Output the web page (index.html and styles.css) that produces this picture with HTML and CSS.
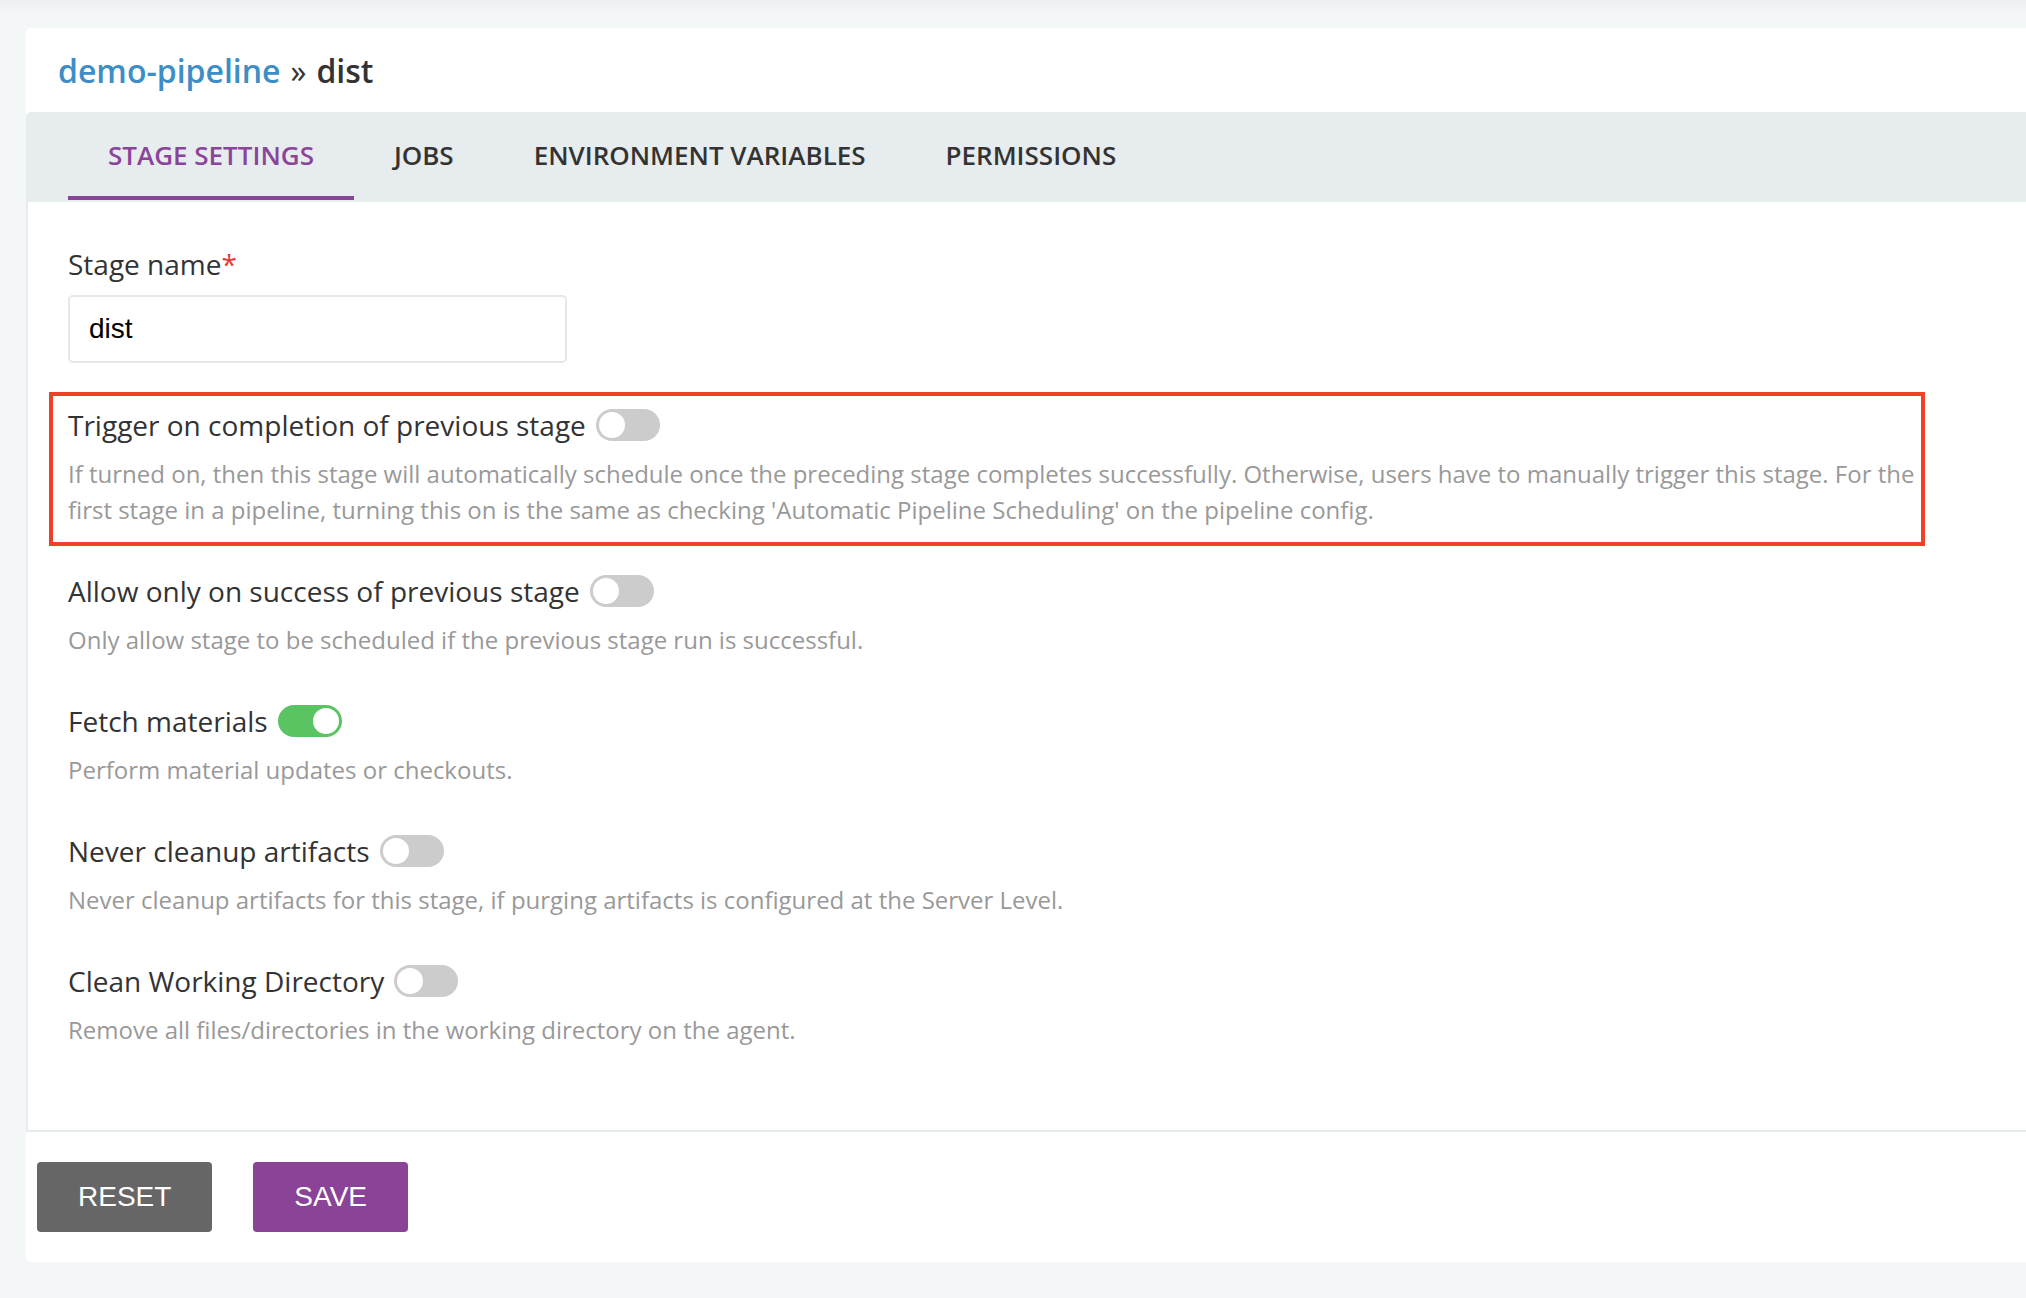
FILE: index.html
```html
<!DOCTYPE html>
<html lang="en">
<head>
  <meta charset="UTF-8" />
  <meta name="viewport" content="width=device-width, initial-scale=1.0"/>
  <title>demo-pipeline » dist</title>
  <link rel="stylesheet" href="styles.css">
</head>
<body>
  <div class="page">
    <div class="card">
      <h1 class="crumb"><a href="#">demo-pipeline</a> <span class="sep">»</span> dist</h1>

      <nav class="tabs">
        <a class="tab active" href="#">Stage Settings</a>
        <a class="tab" href="#">Jobs</a>
        <a class="tab" href="#">Environment Variables</a>
        <a class="tab" href="#">Permissions</a>
      </nav>

      <div class="panel">
        <div class="field">
          <label class="field-label" for="stageName">Stage name<span class="req">*</span></label>
          <input class="text-input" type="text" id="stageName" value="dist" />
        </div>

        <div class="option">
          <div class="field-label">Trigger on completion of previous stage <span class="switch"><span class="knob"></span></span></div>
          <p class="help">If turned on, then this stage will automatically schedule once the preceding stage completes successfully. Otherwise, users have to manually trigger this stage. For the first stage in a pipeline, turning this on is the same as checking 'Automatic Pipeline Scheduling' on the pipeline config.</p>
          <span class="callout"></span>
        </div>

        <div class="option">
          <div class="field-label">Allow only on success of previous stage <span class="switch"><span class="knob"></span></span></div>
          <p class="help">Only allow stage to be scheduled if the previous stage run is successful.</p>
        </div>

        <div class="option">
          <div class="field-label">Fetch materials <span class="switch on"><span class="knob"></span></span></div>
          <p class="help">Perform material updates or checkouts.</p>
        </div>

        <div class="option">
          <div class="field-label">Never cleanup artifacts <span class="switch"><span class="knob"></span></span></div>
          <p class="help">Never cleanup artifacts for this stage, if purging artifacts is configured at the Server Level.</p>
        </div>

        <div class="option">
          <div class="field-label">Clean Working Directory <span class="switch"><span class="knob"></span></span></div>
          <p class="help">Remove all files/directories in the working directory on the agent.</p>
        </div>
      </div>

      <div class="actions">
        <button class="btn btn-reset">RESET</button>
        <button class="btn btn-save">SAVE</button>
      </div>
    </div>
  </div>
</body>
</html>
```

FILE: styles.css
```css
body {
  margin: 0;
  font-family: "Open Sans", sans-serif;
  color: #333;
  background: linear-gradient(#eceff1, #f4f7f8 14px) no-repeat, #f4f7f8;
}

.page {
  padding: 28px 0 34px 26px;
}

.card {
  background: #fff;
  border-radius: 5px 0 0 5px;
}

.crumb {
  display: flex;
  align-items: center;
  gap: 10px;
  height: 84px;
  margin: 0;
  padding-left: 32px;
  font-size: 32px;
  font-weight: 600;
  color: #333;
}

.crumb a {
  color: #3d8dc6;
  text-decoration: none;
}

.crumb .sep {
  font-weight: 400;
}

.tabs {
  display: flex;
  height: 90px;
  padding-left: 42px;
  background: #e7ecef;
  border-radius: 5px 0 0 0;
}

.tab {
  display: flex;
  align-items: center;
  height: 88px;
  box-sizing: border-box;
  padding: 2px 40px 0;
  border-bottom: 4px solid transparent;
  font-size: 26px;
  font-weight: 600;
  color: #333;
  text-decoration: none;
  text-transform: uppercase;
}

.tab.active {
  color: #8a4499;
  border-bottom-color: #8a4499;
}

.panel {
  padding: 44px 88px 37px 40px;
  border-left: 2px solid #e6ebee;
  border-bottom: 2px solid #e6ebee;
}

.field {
  margin-bottom: 44px;
}

.field-label {
  display: flex;
  align-items: center;
  gap: 10px;
  margin: 0;
  font-size: 28px;
  line-height: 36px;
  color: #333;
}

.req {
  color: #e53935;
  margin-left: -10px;
}

.text-input {
  display: block;
  width: 499px;
  height: 68px;
  box-sizing: border-box;
  margin-top: 13px;
  padding: 0 19px;
  border: 2px solid #e4e8ec;
  border-radius: 5px;
  font-family: "Liberation Sans", Arial, sans-serif;
  font-size: 28px;
  color: #000;
}

.option {
  position: relative;
  margin-bottom: 45px;
}

.help {
  margin: 13px 0 0;
  font-size: 24px;
  line-height: 36px;
  color: #999;
}

.switch {
  display: flex;
  flex: none;
  width: 64px;
  height: 32px;
  box-sizing: border-box;
  padding: 3px;
  border-radius: 16px;
  background: #ccc;
}

.switch .knob {
  width: 26px;
  height: 26px;
  border-radius: 50%;
  background: #fff;
}

.switch.on {
  justify-content: flex-end;
  background: #5bc462;
}

/* annotation box drawn over the first option */
.callout {
  position: absolute;
  top: -15px;
  bottom: -18px;
  left: -19px;
  right: 13px;
  border: 4px solid #ee4127;
  pointer-events: none;
}

.actions {
  display: flex;
  gap: 41px;
  padding: 30px 11px;
}

.btn {
  height: 70px;
  padding: 0 41px;
  border: none;
  border-radius: 4px;
  font-family: "Liberation Sans", Arial, sans-serif;
  font-size: 28px;
  color: #fff;
  cursor: pointer;
}

.btn-reset {
  background-color: #666;
}

.btn-save {
  background-color: #8a4396;
}
```
